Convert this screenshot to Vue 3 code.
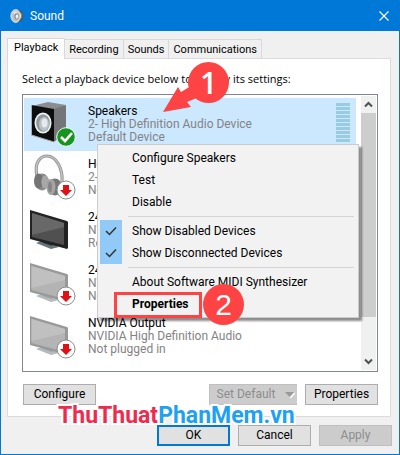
<script setup>
import { ref } from 'vue'

const tabs = ['Playback', 'Recording', 'Sounds', 'Communications']
const activeTab = ref('Playback')

const devices = [
  { name: 'Speakers', driver: '2- High Definition Audio Device', state: 'Default Device', icon: 'speaker', badge: 'ok' },
  { name: 'Headphones', driver: '2- High Definition Audio Device', state: 'Not plugged in', icon: 'headphones', badge: 'down' },
  { name: '24', driver: 'NVIDIA High Definition Audio', state: 'Ready', icon: 'monitor', badge: '' },
  { name: '24', driver: 'NVIDIA High Definition Audio', state: 'Not plugged in', icon: 'monitor-off', badge: 'down' },
  { name: 'NVIDIA Output', driver: 'NVIDIA High Definition Audio', state: 'Not plugged in', icon: 'monitor-off', badge: 'down' }
]
const selected = ref(0)

const showDisabled = ref(true)
const showDisconnected = ref(true)
</script>

<template>
  <main class="window">
    <header class="titlebar">
      <svg class="app-icon" viewBox="0 0 16 16" aria-hidden="true">
        <path d="M6 0L12 2L15 5V10L12 14L7 16Z" fill="#4d4f50" />
        <path d="M10 3L14 5V10L10 12Z" fill="#8b8576" />
        <ellipse cx="6.500" cy="8" rx="5.500" ry="7.300" fill="#bfc4c6" stroke="#eef1f2" />
        <path d="M3 4Q6 1 9 4L7 8Z" fill="#dfe3e4" />
        <ellipse cx="7.500" cy="8.500" rx="2.600" ry="3.600" fill="#8f9699" />
        <ellipse cx="8" cy="8.500" rx="1.500" ry="2.300" fill="#f1f3f3" />
      </svg>
      <h1>Sound</h1>
      <button class="close" aria-label="Close">
        <svg viewBox="0 0 10 10"><path d="M0.5 0.5L9.5 9.5M9.5 0.5L0.5 9.5" stroke="#fff" stroke-width="1.2" fill="none" /></svg>
      </button>
    </header>

    <div class="body">
      <nav class="tabs" role="tablist">
        <button
          v-for="t in tabs"
          :key="t"
          role="tab"
          :aria-selected="activeTab === t"
          :class="['tab', { active: activeTab === t }]"
          @click="activeTab = t"
        >{{ t }}</button>
      </nav>

      <section class="panel">
        <p id="hint" class="hint">Select a playback device below to modify its settings:</p>

        <div class="listbox">
          <ul class="devices" role="listbox" aria-labelledby="hint">
            <li
              v-for="(d, i) in devices"
              :key="i"
              role="option"
              :aria-selected="selected === i"
              :class="['device', { selected: selected === i }]"
              @click="selected = i"
            >
              <svg class="device-icon" viewBox="0 0 48 48" aria-hidden="true">
                <g v-if="d.icon === 'speaker'">
                  <path d="M1 6L17 2L35 5L24 10Z" fill="#8b8d90" />
                  <path d="M23 9L35 5V32L23 42Z" fill="#737578" />
                  <path d="M0 5L23 9V42L0 35Z" fill="#0d0d0d" />
                  <path d="M0.500 5V35L23 42" fill="none" stroke="#a9abac" />
                  <ellipse cx="12" cy="23" rx="8.500" ry="10.500" fill="#ecf0f2" />
                  <ellipse cx="12" cy="23" rx="6.800" ry="8.800" fill="#8f989d" />
                  <ellipse cx="13" cy="24" rx="5" ry="7" fill="#b9c1c5" />
                  <ellipse cx="13.500" cy="23" rx="3" ry="4.500" fill="#e4eaed" />
                </g>
                <g v-else-if="d.icon === 'headphones'">
                  <path d="M6 23C3 10 9 3 16 3C25 3 32 15 31 29" fill="none" stroke="#979797" stroke-width="3.200" />
                  <path d="M6 23C3 10 9 3 16 3C25 3 32 15 31 29" fill="none" stroke="#c9c9c9" stroke-width="1.200" />
                  <ellipse cx="11" cy="29" rx="7" ry="8.500" fill="#8b8b8b" />
                  <ellipse cx="7.500" cy="28" rx="4.500" ry="7.500" fill="#747474" />
                  <ellipse cx="14" cy="29" rx="3.600" ry="6.500" fill="#a8a8a8" />
                  <ellipse cx="24" cy="34" rx="7" ry="8.500" fill="#777" />
                  <ellipse cx="20" cy="34" rx="4.500" ry="8" fill="#a4a4a4" />
                  <ellipse cx="19" cy="34" rx="2" ry="5.500" fill="#858585" />
                </g>
                <g v-else-if="d.icon === 'monitor'">
                  <path d="M5 37L13 34L28 41L20 43Z" fill="#68757d" />
                  <path d="M12 32L21 35V40L12 37Z" fill="#353a3d" />
                  <path d="M-1 4L36 15L37 16V42L36 43L-1 33Z" fill="#222" />
                  <path d="M1 7L33 17V39L1 31Z" fill="#505050" />
                  <path d="M1 7L33 17V21L1 29Z" fill="#686868" />
                </g>
                <g v-else>
                  <path d="M5 37L13 34L28 41L20 43Z" fill="#b4babd" />
                  <path d="M12 32L21 35V40L12 37Z" fill="#a2a2a2" />
                  <path d="M-1 4L36 15L37 16V42L36 43L-1 33Z" fill="#999" />
                  <path d="M0.500 7L34 17V40L0.500 31Z" fill="#b4b4b4" />
                  <path d="M0.500 7L34 17V21L0.500 29Z" fill="#c0c0c0" />
                </g>
                <g v-if="d.badge === 'ok'">
                  <circle cx="35" cy="37" r="9.300" fill="#16941f" stroke="#f2fff2" />
                  <path d="M30 37L34 41L41 33" fill="none" stroke="#fff" stroke-width="2.600" />
                </g>
                <g v-if="d.badge === 'down'">
                  <circle cx="35" cy="37" r="9" fill="#fff" stroke="#8c8c8c" />
                  <path d="M32 32H38V37H41L35 43L29 37H32Z" fill="#df1018" />
                </g>
              </svg>
              <div class="device-text">
                <strong>{{ d.name }}</strong>
                <span>{{ d.driver }}</span>
                <span>{{ d.state }}</span>
              </div>
              <div v-if="selected === i" class="meter" aria-hidden="true"><i v-for="n in 10" :key="n"></i></div>
            </li>
          </ul>
          <div class="scrollbar" aria-hidden="true">
            <svg viewBox="0 0 15 17"><path d="M4 10.500L7.500 7L11 10.500" /></svg>
            <div class="thumb"></div>
            <svg viewBox="0 0 15 17"><path d="M4 6.500L7.500 10L11 6.500" /></svg>
          </div>
        </div>

        <div class="actions">
          <button class="btn">Configure</button>
          <span class="split">
            <button class="btn" disabled>Set Default</button>
            <button class="btn arrow" disabled aria-label="More default options">
              <svg viewBox="0 0 10 6"><path d="M10 1L5 6" stroke="#fff" stroke-width="1.500" /><path d="M0 0H9L4.500 5Z" fill="#9a9a9a" /></svg>
            </button>
          </span>
          <button class="btn">Properties</button>
        </div>
      </section>

      <footer class="footer">
        <button class="btn primary">OK</button>
        <button class="btn">Cancel</button>
        <button class="btn" disabled>Apply</button>
      </footer>
    </div>

    <div class="menu" role="menu">
      <button role="menuitem">Configure Speakers</button>
      <button role="menuitem">Test</button>
      <button role="menuitem">Disable</button>
      <hr />
      <button role="menuitemcheckbox" :aria-checked="showDisabled" @click="showDisabled = !showDisabled">
        <span v-if="showDisabled" class="check"><svg viewBox="0 0 12 10"><path d="M1 5L4.500 8.500L11 1.500" /></svg></span>Show Disabled Devices
      </button>
      <button role="menuitemcheckbox" :aria-checked="showDisconnected" @click="showDisconnected = !showDisconnected">
        <span v-if="showDisconnected" class="check"><svg viewBox="0 0 12 10"><path d="M1 5L4.500 8.500L11 1.500" /></svg></span>Show Disconnected Devices
      </button>
      <hr />
      <button role="menuitem">About Software MIDI Synthesizer</button>
      <button role="menuitem" class="default">Properties</button>
    </div>

    <div class="highlight"></div>
    <svg class="pointer" viewBox="0 0 34 26" aria-hidden="true"><path d="M0 25L15 0L18 5L28 -1L36 10L24 15L28 20Z" fill="#fd4344" /></svg>
    <span class="step one">1</span>
    <span class="step two">2</span>
    <div class="watermark"><span>ThuThuat</span>PhanMem.vn</div>
  </main>
</template>

<style>
body {
  background: #f0f0f0;
}
</style>

<style scoped>
* {
  box-sizing: border-box;
}
.window {
  position: relative;
  display: flex;
  flex-direction: column;
  min-height: 100vh;
  border: 1px solid #0078d7;
  background: #f0f0f0;
  color: #000;
  font: 12px/13px Roboto, "Noto Sans", sans-serif;
}
button {
  font: inherit;
  color: inherit;
  padding: 0;
  white-space: nowrap;
}
.titlebar {
  display: flex;
  align-items: center;
  height: 30px;
  padding: 0 10px 0 9px;
  background: #0078d7;
  color: #fff;
}
.app-icon {
  width: 14px;
  height: 16px;
}
h1 {
  flex: 1;
  margin: 0 0 0 6px;
  font-size: 12px;
  font-weight: 400;
}
.close {
  display: flex;
  border: 0;
  background: none;
}
.close svg {
  width: 10px;
  height: 10px;
}
.body {
  flex: 1;
  padding: 7px 7px 0 6px;
}
.tabs {
  display: flex;
  align-items: flex-end;
  height: 20px;
}
.tab {
  height: 19px;
  padding: 0 4px;
  border: 1px solid #d9d9d9;
  border-width: 1px 1px 0 0;
  background: #f0f0f0;
  font-size: 11px;
}
.tab.active {
  position: relative;
  height: 21px;
  margin-bottom: -1px;
  padding: 0 6px 3px;
  border-left-width: 1px;
  background: #fff;
}
.panel {
  margin-right: 1px;
  padding: 13px 12px 11px 14px;
  border: 1px solid #dcdcdc;
  background: #fff;
}
.hint {
  margin: 0 0 9px;
  font-family: "Open Sans", "Noto Sans", sans-serif;
  font-size: 11px;
}
.listbox {
  display: flex;
  gap: 5px;
  height: 278px;
  padding: 1px;
  border: 1px solid #828790;
}
.devices {
  flex: 1;
  margin: 0;
  padding: 2px 0 0;
  list-style: none;
  overflow: hidden;
}
.device {
  display: flex;
  height: 53px;
  padding: 2px 6px 0 7px;
}
.device.selected {
  background: #cce8ff;
}
.device-icon {
  flex: none;
  width: 48px;
  height: 48px;
  overflow: visible;
}
.device-text {
  display: flex;
  flex: 1;
  flex-direction: column;
  padding: 5px 0 0 9px;
  color: #838383;
  white-space: nowrap;
}
.device-text strong {
  color: #000;
  font-weight: 400;
}
.meter {
  display: grid;
  align-content: start;
  gap: 1px;
  width: 14px;
  padding-top: 3px;
}
.meter i {
  height: 3px;
  background: #99cbe2;
}
.scrollbar {
  display: flex;
  flex-direction: column;
  width: 15px;
  background: #f0f0f0;
}
.scrollbar svg {
  width: 15px;
  height: 17px;
  fill: none;
  stroke: #505050;
  stroke-width: 2;
}
.thumb {
  height: 204px;
  margin-bottom: auto;
  background: #cdcdcd;
}
.actions {
  display: flex;
  gap: 8px;
  padding: 12px 0 0 1px;
}
.btn {
  width: 73px;
  height: 21px;
  border: 1px solid #adadad;
  background: #e1e1e1;
}
.btn:disabled {
  border-color: #bfbfbf;
  background: #ccc;
  color: #8d8d8d;
}
.btn.primary {
  border: 2px solid #0078d7;
}
.split {
  display: flex;
  margin-left: auto;
}
.split .btn {
  border-right: 0;
}
.split .arrow {
  width: 15px;
  border-left: 0;
  box-shadow: inset 1px 3px #ccc, inset 0 -3px #ccc, inset 1px 0 #aaa;
}
.arrow svg {
  width: 10px;
  height: 6px;
}
.footer {
  display: flex;
  justify-content: flex-end;
  gap: 8px;
  padding: 8px 0;
}
.menu {
  position: absolute;
  top: 143px;
  left: 96px;
  width: 262px;
  padding: 2px;
  border: 1px solid #ccc;
  background: #f2f2f2;
  box-shadow: 3px 3px 2px rgba(0, 0, 0, 0.45);
}
.menu button {
  display: flex;
  align-items: center;
  width: 100%;
  height: 22px;
  padding-left: 32px;
  border: 0;
  background: none;
}
.menu .default {
  font-weight: 700;
}
.menu hr {
  height: 1px;
  margin: 3px 2px 3px 28px;
  border: 0;
  background: #d4d4d4;
}
.check {
  display: flex;
  align-items: center;
  justify-content: center;
  width: 22px;
  height: 22px;
  margin: 0 10px 0 -32px;
  background: #91c9f7;
}
.check svg {
  width: 12px;
  height: 10px;
  fill: none;
  stroke: #333;
  stroke-width: 1.5;
}
.highlight {
  position: absolute;
  top: 291px;
  left: 113px;
  width: 88px;
  height: 26px;
  border: 3px solid #fd4344;
}
.pointer {
  position: absolute;
  top: 86px;
  left: 162px;
  width: 34px;
  height: 26px;
  overflow: visible;
}
.step {
  position: absolute;
  width: 41px;
  height: 41px;
  border-radius: 50%;
  background: #fd4344;
  color: #fff;
  font: 30px/41px "Liberation Sans", sans-serif;
  text-align: center;
}
.one {
  top: 61px;
  left: 187px;
  font-family: "Open Sans", sans-serif;
  font-weight: 600;
}
.two {
  top: 283px;
  left: 202px;
}
.watermark {
  position: absolute;
  top: 400px;
  left: 57px;
  color: #1ea1f2;
  font: 700 23px/30px Roboto, "Liberation Sans", sans-serif;
  white-space: nowrap;
  -webkit-text-stroke: 4px #fff;
  paint-order: stroke fill;
}
.watermark span {
  color: #ee2b4f;
}
</style>
